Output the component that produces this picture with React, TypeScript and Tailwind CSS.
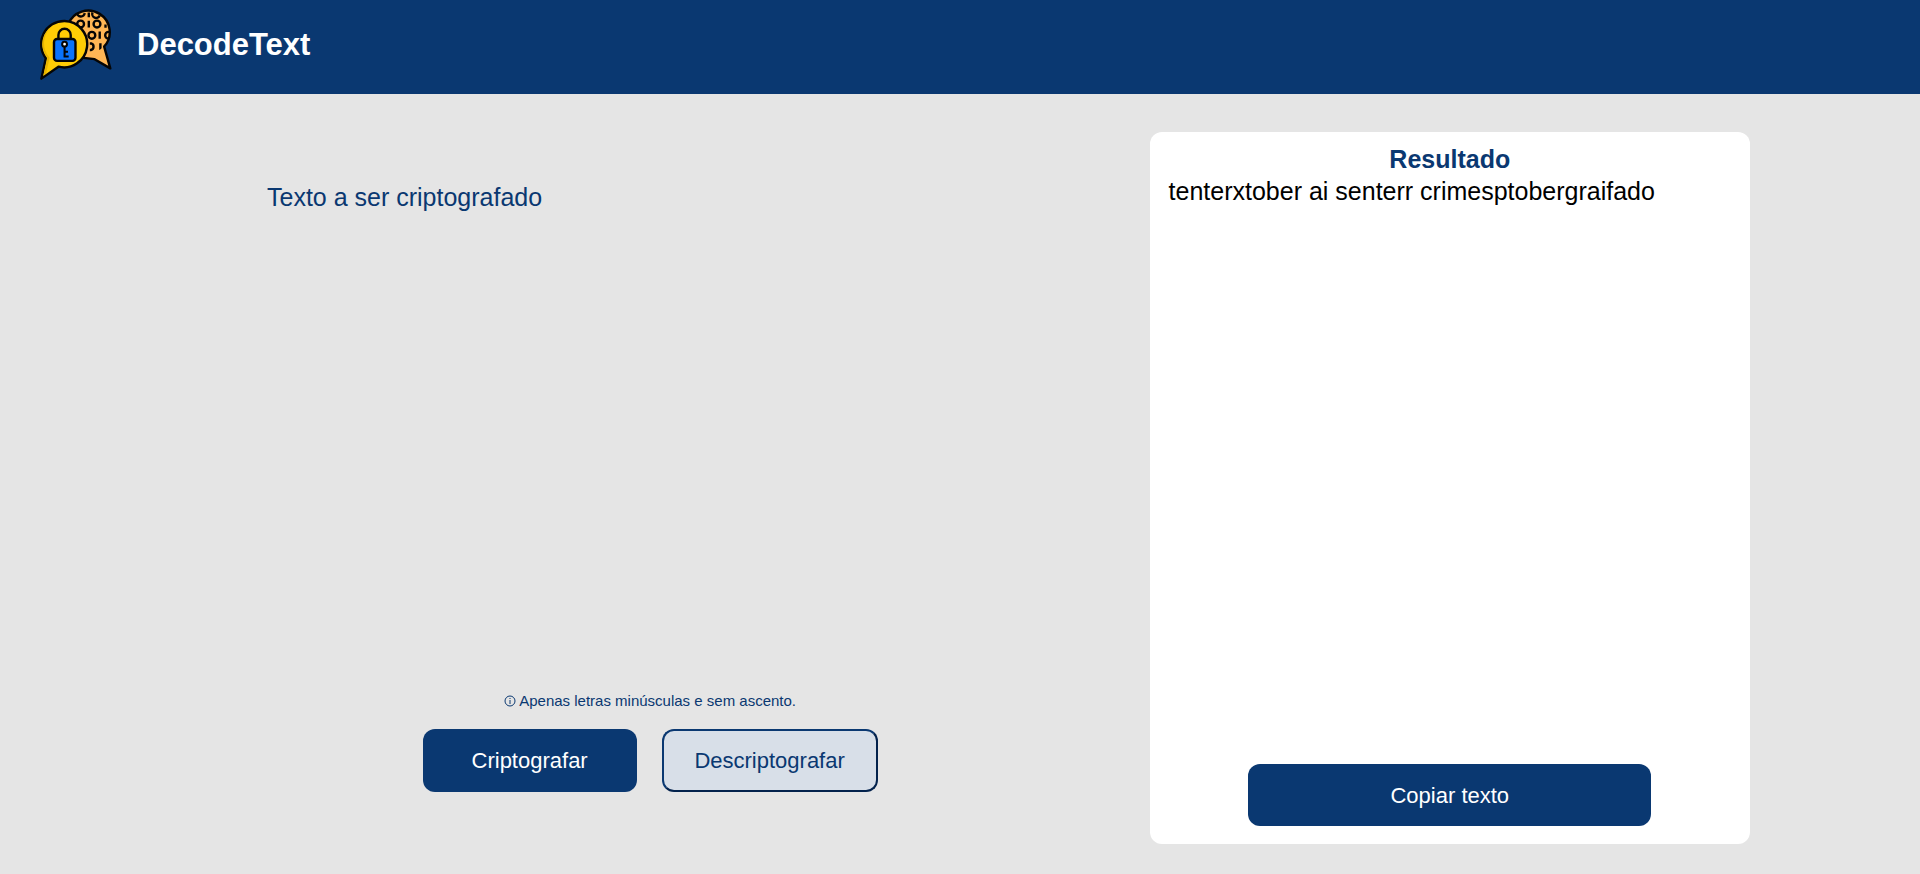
import { useState } from "react";

function Logo() {
  return (
    <svg viewBox="32 26 211 211" className="size-18 shrink-0" aria-hidden="true">
      <path
        d="M115 73 A63 63 0 1 1 220 139 L238 203 L192 176 L160 172 Z"
        fill="#ffb655"
        stroke="#050505"
        strokeWidth="7"
        strokeLinejoin="round"
      />
      <clipPath id="back-bubble">
        <circle cx="174" cy="95" r="63" />
      </clipPath>
      <g fill="none" stroke="#050505" strokeWidth="7" clipPath="url(#back-bubble)">
        <path d="M141 39 A11 11 0 0 0 163 41" />
        <path d="M175 39 V53" />
        <path d="M186 39 A11 11 0 0 0 207 48" />
        <circle cx="151" cy="73" r="10" />
        <path d="M175 63 V83" />
        <circle cx="199" cy="73" r="10" />
        <path d="M224 74 V84" />
        <circle cx="184" cy="106" r="10" />
        <path d="M207 95 V116" />
        <circle cx="233" cy="106" r="10" />
        <path d="M178 130 H182 A10 10 0 0 1 182 149 H178" />
        <path d="M209 129 V151" />
      </g>
      <path
        d="M104 64 A68 68 0 1 1 86 198 L36 233 L49 173 A68 68 0 0 1 104 64 Z"
        fill="#ffcc05"
        stroke="#050505"
        strokeWidth="7"
        strokeLinejoin="round"
      />
      <path d="M70 77 A63 63 0 0 0 54 172 L42 224 L50 218 L60 172 A65 65 0 0 1 70 77 Z" fill="#e8b400" />
      <g stroke="#050505" strokeWidth="7" strokeLinejoin="round">
        <path d="M86 117 V105 A17 17 0 0 1 122 105 V117" fill="none" />
        <rect x="73" y="117" width="63" height="64" rx="9" fill="#0a73fb" />
      </g>
      <g fill="none" stroke="#050505" strokeWidth="6">
        <circle cx="104" cy="132" r="7" fill="#ffffff" />
        <path d="M104 140 V171 M104 168 H116 M104 154 H114" />
      </g>
    </svg>
  );
}

const rules: Record<string, string> = {
  e: "enter",
  i: "imes",
  a: "ai",
  o: "ober",
  u: "ufat",
};

function encrypt(text: string) {
  return text.replace(/[eiaou]/g, (letter) => rules[letter]);
}

function decrypt(text: string) {
  return Object.entries(rules).reduce((out, [letter, code]) => out.split(code).join(letter), text);
}

export default function App() {
  const [text, setText] = useState("Texto a ser criptografado");
  const [result, setResult] = useState("tenterxtober ai senterr crimesptobergraifado");

  return (
    <div className="flex min-h-screen flex-col bg-[#e5e5e5] font-['Liberation_Sans',Arial,sans-serif] text-[#0a3871]">
      <header className="flex items-start gap-[25px] bg-[#0a3871] px-10 pt-2 pb-3.5">
        <Logo />
        <h1 className="self-center pt-0.5 text-[31px] leading-9 font-bold text-white">DecodeText</h1>
      </header>

      <main className="grid flex-1 grid-cols-[771fr_601fr] gap-[7.7%] pt-[38px] pr-[170px] pb-[30px] pl-[265px]">
        <section className="flex flex-col items-center pt-[47px] pb-[52px]">
          <textarea
            aria-label="Texto a ser criptografado"
            className="w-full flex-1 resize-none bg-transparent px-0.5 text-[25px] leading-9 outline-none"
            value={text}
            onChange={(event) => setText(event.target.value)}
          />
          <p className="mb-[18px] flex items-center gap-[3px] text-[15px] leading-5">
            <svg viewBox="0 0 12 12" className="size-3" fill="none" stroke="currentColor" aria-hidden="true">
              <circle cx="6" cy="6" r="5" />
              <path d="M6 5 V9 M6 3 V4" />
            </svg>
            Apenas letras minúsculas e sem ascento.
          </p>
          <div className="flex gap-[25px]">
            <button
              type="button"
              onClick={() => setResult(encrypt(text.toLowerCase()))}
              className="h-[63px] w-[214px] rounded-xl bg-[#0a3871] text-[22px] text-white"
            >
              Criptografar
            </button>
            <button
              type="button"
              onClick={() => setResult(decrypt(text.toLowerCase()))}
              className="h-[63px] w-[216px] rounded-xl border-2 border-t-[#0a3871] border-r-[#03224c] border-b-[#03224c] border-l-[#0a3871] bg-[#d8dfe8] text-[22px]"
            >
              Descriptografar
            </button>
          </div>
        </section>

        <section className="flex flex-col items-center rounded-xl bg-white px-[19px] pt-[11px] pb-[18px]">
          <h2 className="text-[25px] leading-8 font-bold">Resultado</h2>
          <p className="w-full flex-1 text-[25px] leading-8 break-words text-black">{result}</p>
          <button
            type="button"
            onClick={() => navigator.clipboard?.writeText(result)}
            className="h-[62px] w-[403px] max-w-full rounded-xl bg-[#0a3871] text-[22px] text-white"
          >
            Copiar texto
          </button>
        </section>
      </main>
    </div>
  );
}
